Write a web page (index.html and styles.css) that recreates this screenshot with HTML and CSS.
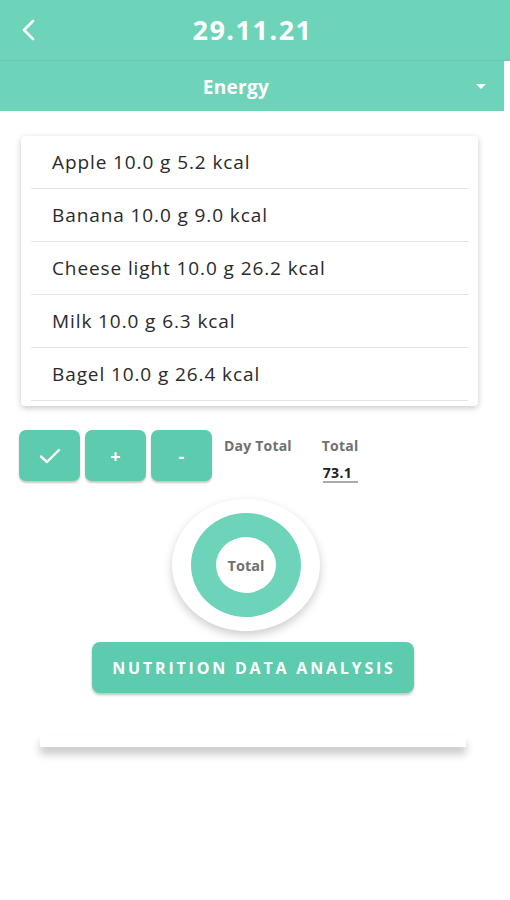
FILE: index.html
```html
<!DOCTYPE html>
<html>
<head>
    <title>29.11.21</title>
    <link rel="stylesheet" href="styles.css">
</head>
<body>
  <header class="topbar">
      <span class="back">
          <svg width="16" height="24" viewBox="0 0 16 24"><path d="M13 3 L4 12 L13 21" fill="none" stroke="#fff" stroke-width="2.6" stroke-linecap="round" stroke-linejoin="round"/></svg>
      </span>
      <h1 class="date">29.11.21</h1>
  </header>
  <div class="selectbar">
      <span class="select-label">Energy</span>
      <span class="caret"></span>
  </div>

  <div class="list-card">
      <div class="row">Apple 10.0 g 5.2 kcal</div>
      <div class="row">Banana 10.0 g 9.0 kcal</div>
      <div class="row">Cheese light 10.0 g 26.2 kcal</div>
      <div class="row">Milk 10.0 g 6.3 kcal</div>
      <div class="row">Bagel 10.0 g 26.4 kcal</div>
      <div class="row row-cut"></div>
  </div>

  <div class="actions">
      <button class="sq-btn">
          <svg width="22" height="18" viewBox="0 0 22 18"><path d="M2 9.5 L8 15 L20 3" fill="none" stroke="#fff" stroke-width="2.4" stroke-linecap="round" stroke-linejoin="round"/></svg>
      </button>
      <button class="sq-btn">+</button>
      <button class="sq-btn">-</button>
      <span class="day-total">Day Total</span>
      <div class="total-box">
          <span class="total-label">Total</span>
          <span class="total-value">73.1</span>
      </div>
  </div>

  <div class="chart-wrap">
      <div class="chart-outer">
          <div class="ring">
              <div class="ring-hole">Total</div>
          </div>
      </div>
  </div>

  <div class="analysis-wrap">
      <button class="analysis-btn">NUTRITION DATA ANALYSIS</button>
  </div>

  <div class="bottom-card"></div>
</body>
</html>
```

FILE: styles.css
```css
body{
    margin: 0px;
    padding: 0px;
    background: #fff;
    font-family: "Open Sans", "Liberation Sans", sans-serif;
    width: 510px;
    height: 900px;
    overflow: hidden;
}

.topbar{
    height: 60px;
    background: #6dd3b9;
    display: flex;
    align-items: center;
    justify-content: center;
    position: relative;
    border-bottom: 1px solid #63c7ad;
}

.back{
    position: absolute;
    left: 20px;
    top: 18px;
}

.date{
    margin: 0px;
    color: #fff;
    font-size: 27px;
    font-weight: bold;
    letter-spacing: 1.5px;
    padding-right: 5px;
    line-height: 30px;
}

.selectbar{
    width: 504px;
    height: 50px;
    background: #6dd3b9;
    display: flex;
    align-items: center;
    justify-content: center;
    position: relative;
}

.select-label{
    color: #fff;
    font-size: 19px;
    font-weight: bold;
    letter-spacing: 0.3px;
    margin-left: -32px;
    margin-top: 1px;
}

.caret{
    position: absolute;
    right: 18px;
    top: 23px;
    width: 0;
    height: 0;
    border-left: 5px solid transparent;
    border-right: 5px solid transparent;
    border-top: 5px solid #fff;
}

.list-card{
    margin: 25px 0 0 21px;
    width: 457px;
    height: 270px;
    background: #fff;
    border-radius: 4px;
    box-shadow: 0 2px 6px rgba(0,0,0,0.22);
    overflow: hidden;
    padding: 0 10px;
    box-sizing: border-box;
}

.row{
    height: 53px;
    border-bottom: 1px solid #e4e4e4;
    box-sizing: border-box;
    padding: 13px 0 0 21px;
    font-size: 19px;
    letter-spacing: 0.9px;
    line-height: 26px;
    color: #2a2a2a;
}

.row-cut{
    height: 53px;
}

.actions{
    display: flex;
    align-items: flex-start;
    margin: 24px 0 0 19px;
}

.sq-btn{
    width: 61px;
    height: 51px;
    margin-right: 5px;
    background: #5ccbae;
    border: none;
    border-radius: 7px;
    box-shadow: 0 2px 2px rgba(0,0,0,0.22);
    color: #fff;
    font-family: "Open Sans", "Liberation Sans", sans-serif;
    font-size: 18px;
    font-weight: bold;
    display: flex;
    align-items: center;
    justify-content: center;
    padding: 0;
}

.day-total{
    margin: 6px 0 0 7px;
    font-size: 14px;
    letter-spacing: 0.2px;
    font-weight: bold;
    color: #707070;
}

.total-box{
    display: flex;
    flex-direction: column;
    margin: 6px 0 0 30px;
}

.total-label{
    font-size: 14px;
    letter-spacing: 0.2px;
    font-weight: bold;
    color: #707070;
}

.total-value{
    margin-top: 10px;
    margin-left: 1px;
    font-size: 14px;
    letter-spacing: 0.3px;
    font-weight: bold;
    color: #222;
    border-bottom: 2px solid #aaa;
    line-height: 15px;
    padding-bottom: 1px;
    width: 35px;
}

.chart-wrap{
    display: flex;
    justify-content: center;
    margin-top: 16px;
    padding-right: 18px;
}

.chart-outer{
    width: 148px;
    height: 132px;
    border-radius: 50%;
    background: #fff;
    box-shadow: 0 4px 10px rgba(0,0,0,0.2);
    display: flex;
    align-items: center;
    justify-content: center;
}

.ring{
    width: 110px;
    height: 104px;
    border-radius: 50%;
    background: #6dd3b9;
    display: flex;
    align-items: center;
    justify-content: center;
}

.ring-hole{
    width: 60px;
    height: 56px;
    border-radius: 50%;
    background: #fff;
    display: flex;
    align-items: center;
    justify-content: center;
    font-size: 14.5px;
    font-weight: bold;
    color: #707070;
}

.analysis-wrap{
    display: flex;
    justify-content: center;
    margin-top: 11px;
    padding-right: 5px;
}

.analysis-btn{
    width: 322px;
    height: 51px;
    background: #5ccbae;
    border: none;
    border-radius: 8px;
    box-shadow: 0 2px 3px rgba(0,0,0,0.25);
    color: #fff;
    font-family: "Open Sans", "Liberation Sans", sans-serif;
    font-size: 16px;
    font-weight: bold;
    letter-spacing: 2.8px;
    padding: 0 0 0 3px;
}

.bottom-card{
    margin: 42px 0 0 40px;
    width: 426px;
    height: 12px;
    background: #fff;
    box-shadow: 0 7px 9px rgba(0,0,0,0.22);
}
```
